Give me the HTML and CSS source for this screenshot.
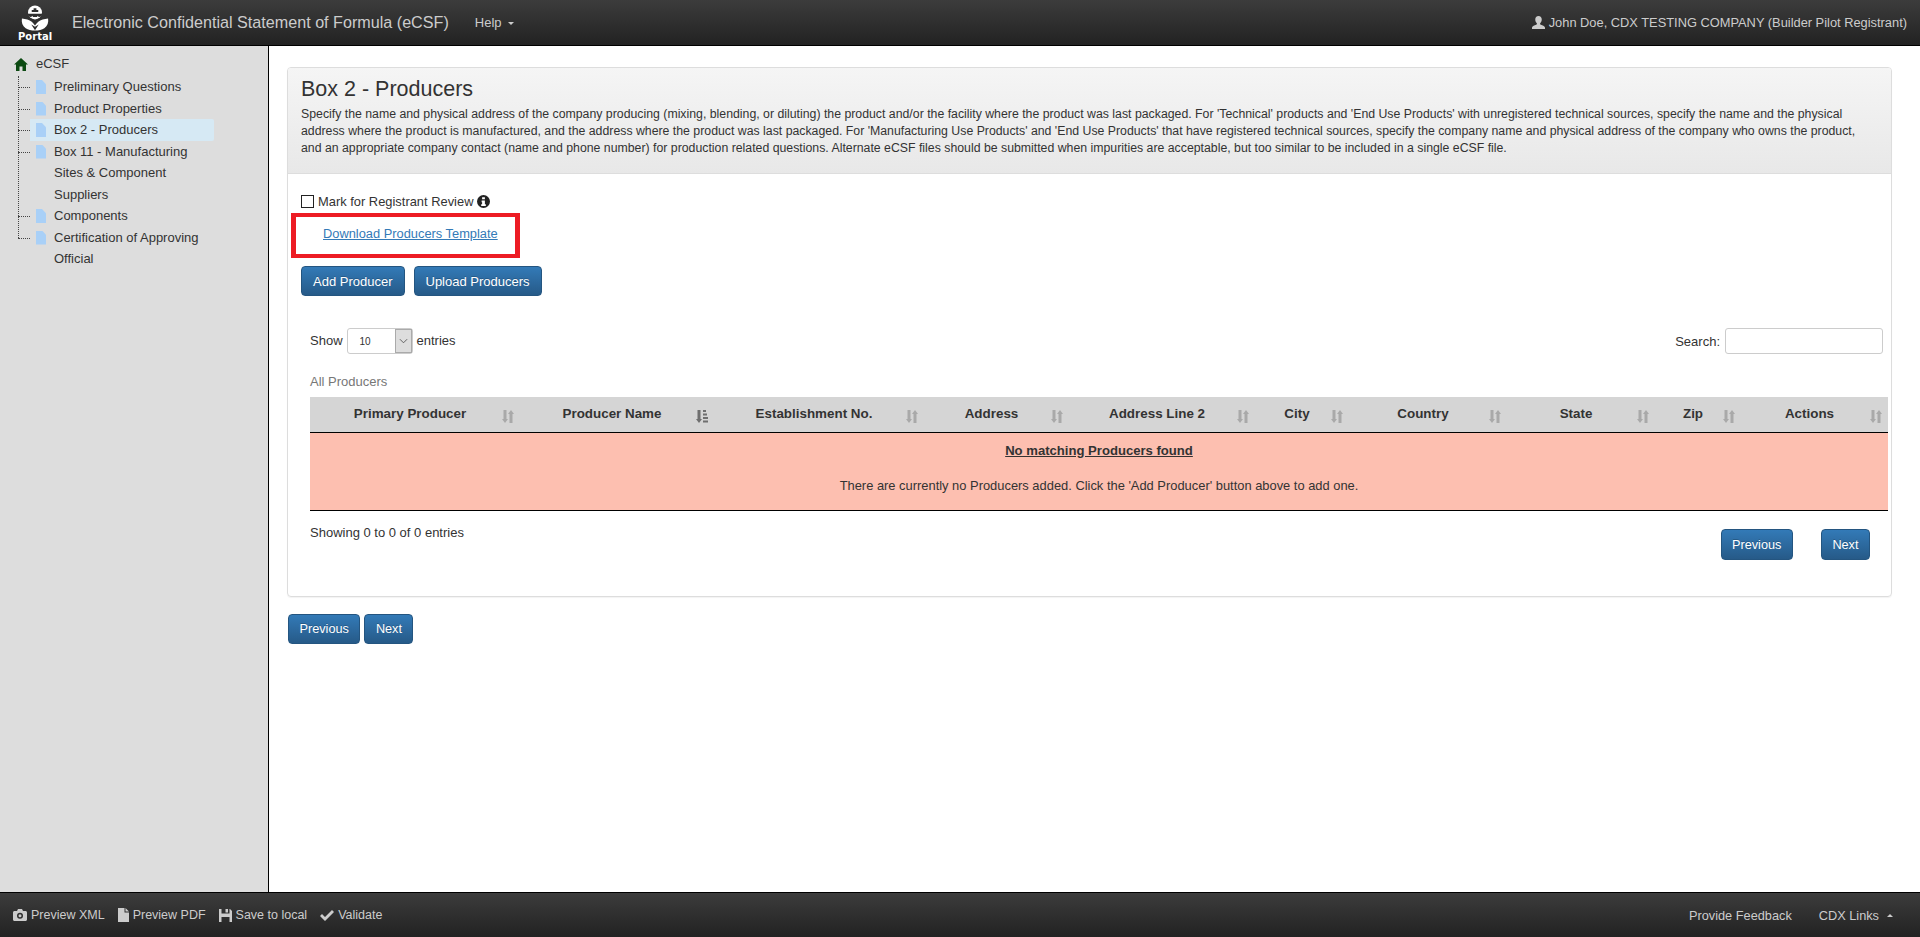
FILE: index.html
```html
<!DOCTYPE html>
<html lang="en">
<head>
<meta charset="utf-8">
<title>eCSF - Box 2 - Producers</title>
<link rel="stylesheet" href="styles.css">
</head>
<body>
<div class="app">
  <header class="topbar">
    <div class="logo">
      <svg class="logo-mark" viewBox="0 0 30 28" width="28" height="28">
        <circle cx="15" cy="8" r="7.500" fill="#fff"/>
        <path d="M7.500 9.500h15v1.500c-1.500 1.500-3 2-3.500 2l-1-1.500-1 1.500h-4l-1-1.500-1 1.500c-.5 0-2-.5-3.500-2z" fill="#2f2f2f"/>
        <path d="M13.500 3.500h3v2h2v2h-7v-2h2z" fill="#2f2f2f"/>
        <path d="M1 14.500c4 .5 8 1.500 10.500 3.500 1.500 1.200 2.800 3 3.500 4 .7-1 2-2.800 3.500-4 2.500-2 6.500-3 10.500-3.500.7 4-.5 8-4 10.500-2.500 1.800-6 2.500-10 2.500s-7.500-.7-10-2.500C1.500 22.500.3 18.500 1 14.500z" fill="#fff"/>
        <path d="M15 27l-4-6 4 2.500 4-2.500z" fill="#2f2f2f"/>
      </svg>
      <span class="logo-text">Portal</span>
    </div>
    <span class="brand">Electronic Confidential Statement of Formula (eCSF)</span>
    <span class="menu">Help <i class="caret"></i></span>
    <span class="user">
      <svg class="icon" viewBox="0 0 14 14" width="13" height="13"><path d="M7 0c2.200 0 3.500 1.500 3.500 3.800 0 1.700-.8 3.200-1.700 4-.3.800 0 1.300.8 1.700 1.700.7 3.900 1.300 4.400 3v1.500H0V12.500c.5-1.700 2.700-2.300 4.400-3 .8-.4 1.100-.9.800-1.700-.9-.8-1.700-2.300-1.700-4C3.500 1.500 4.800 0 7 0z" fill="#ccc"/></svg>
      John Doe, CDX TESTING COMPANY (Builder Pilot Registrant)
    </span>
  </header>

  <div class="middle">
    <nav class="sidebar">
      <div class="tree-root">
        <svg class="home" viewBox="0 0 14 13" width="14" height="13"><path d="M7 0l7 6.500h-2V13H8.500V8.500h-3V13H2V6.500H0z" fill="#0c4a12"/></svg>
        <span>eCSF</span>
      </div>
      <ul class="tree">
        <li class="node"><a>Preliminary Questions</a></li>
        <li class="node"><a>Product Properties</a></li>
        <li class="node node-selected"><a>Box 2 - Producers</a></li>
        <li class="node"><a>Box 11 - Manufacturing Sites &amp; Component Suppliers</a></li>
        <li class="node"><a>Components</a></li>
        <li class="node"><a>Certification of Approving Official</a></li>
      </ul>
    </nav>

    <main class="content">
      <section class="panel">
        <div class="panel-heading">
          <h1>Box 2 - Producers</h1>
          <p>Specify the name and physical address of the company producing (mixing, blending, or diluting) the product and/or the facility where the product was last packaged. For 'Technical' products and 'End Use Products' with unregistered technical sources, specify the name and the physical address where the product is manufactured, and the address where the product was last packaged. For 'Manufacturing Use Products' and 'End Use Products' that have registered technical sources, specify the company name and physical address of the company who owns the product, and an appropriate company contact (name and phone number) for production related questions. Alternate eCSF files should be submitted when impurities are acceptable, but too similar to be included in a single eCSF file.</p>
        </div>
        <div class="panel-body">
          <label class="review">
            <input type="checkbox" class="check">
            <span>Mark for Registrant Review</span>
            <svg class="info" viewBox="0 0 14 14" width="13" height="13"><circle cx="7" cy="7" r="7" fill="#222"/><path d="M5.500 2.500h3v2h-3zM5 6h3.500v4H9.500v1.800h-5V10h1V7.800H5z" fill="#fff"/></svg>
          </label>
          <div class="highlight"><a href="#">Download Producers Template</a></div>
          <div class="actions">
            <button class="btn btn-wide">Add Producer</button>
            <button class="btn btn-wide">Upload Producers</button>
          </div>
          <div class="datatable">
            <div class="dt-top">
              <div class="length">Show
                <div class="select"><span>10</span><span class="select-arrow"><svg viewBox="0 0 10 6" width="9" height="6"><path d="M1 1l4 4 4-4" fill="none" stroke="#555" stroke-width="1"/></svg></span></div>
                entries</div>
              <label class="search">Search: <input type="text"></label>
            </div>
            <div class="caption">All Producers</div>
            <table>
              <thead>
                <tr>
                  <th>Primary Producer<svg class="sort" viewBox="0 0 12 13"><use href="#both"/></svg></th>
                  <th>Producer Name<svg class="sort" viewBox="0 0 12 13"><use href="#asc"/></svg></th>
                  <th>Establishment No.<svg class="sort" viewBox="0 0 12 13"><use href="#both"/></svg></th>
                  <th>Address<svg class="sort" viewBox="0 0 12 13"><use href="#both"/></svg></th>
                  <th>Address Line 2<svg class="sort" viewBox="0 0 12 13"><use href="#both"/></svg></th>
                  <th>City<svg class="sort" viewBox="0 0 12 13"><use href="#both"/></svg></th>
                  <th>Country<svg class="sort" viewBox="0 0 12 13"><use href="#both"/></svg></th>
                  <th>State<svg class="sort" viewBox="0 0 12 13"><use href="#both"/></svg></th>
                  <th>Zip<svg class="sort" viewBox="0 0 12 13"><use href="#both"/></svg></th>
                  <th>Actions<svg class="sort" viewBox="0 0 12 13"><use href="#both"/></svg></th>
                </tr>
              </thead>
              <tbody>
                <tr>
                  <td colspan="10">
                    <p class="empty-title">No matching Producers found</p>
                    <p class="empty-text">There are currently no Producers added. Click the 'Add Producer' button above to add one.</p>
                  </td>
                </tr>
              </tbody>
            </table>
            <div class="dt-bottom">
              <div class="info-text">Showing 0 to 0 of 0 entries</div>
              <div class="paging">
                <button class="btn btn-page">Previous</button>
                <button class="btn btn-page">Next</button>
              </div>
            </div>
          </div>
        </div>
      </section>
      <div class="wizard">
        <button class="btn">Previous</button>
        <button class="btn">Next</button>
      </div>
    </main>
  </div>

  <footer class="bottombar">
    <span class="tool"><svg class="icon" viewBox="0 0 14 12" width="14" height="12"><path d="M1.500 2H4l1-2h4l1 2h2.500c.8 0 1.500.7 1.500 1.500v7c0 .8-.7 1.500-1.500 1.500h-11C.7 12 0 11.300 0 10.500v-7C0 2.700.7 2 1.500 2zM7 3.800a3 3 0 1 0 0 6 3 3 0 0 0 0-6zm0 1.500a1.500 1.500 0 1 1 0 3 1.500 1.500 0 0 1 0-3z" fill="#ccc" fill-rule="evenodd"/></svg>Preview XML</span>
    <span class="tool"><svg class="icon" viewBox="0 0 11 14" width="11" height="14"><path d="M0 0h6.500v4.500H11V14H0zM7.500 0L11 3.500H7.500z" fill="#ccc"/></svg>Preview PDF</span>
    <span class="tool"><svg class="icon" viewBox="0 0 13 13" width="13" height="13"><path d="M0 0h2.500v4.500h8V0H11l2 2v11h-2.500V8h-8v5H0zM6.500 0h2.500v3.500H6.500z" fill="#ccc"/></svg>Save to local</span>
    <span class="tool"><svg class="icon" viewBox="0 0 14 11" width="14" height="11"><path d="M0 6l2-2 3 3 7-7 2 2-9 9z" fill="#ccc"/></svg>Validate</span>
    <span class="spacer"></span>
    <span class="tool tool-feedback">Provide Feedback</span>
    <span class="tool tool-links">CDX Links <i class="caret caret-up"></i></span>
  </footer>
</div>
<svg class="defs" width="0" height="0">
  <defs>
    <g id="both" fill="#a9a9a9"><path d="M1.500 0h3v9H6L3 13 0 9h1.500z"/><path d="M9 0l3 4h-1.500v9h-3V4H6z"/></g>
    <g id="asc" fill="#6f6f6f"><path d="M1.500 0h3v9H6L3 13 0 9h1.500z"/><path d="M7 0h3v2H7zM7 3.500h4v2H7zM7 7h5v2H7zM7 10.500h5.500v2H7z"/></g>
  </defs>
</svg>
</body>
</html>
```
FILE: styles.css
```css
* { box-sizing: border-box; }
html, body { height: 100%; margin: 0; }
body {
  font-family: "Liberation Sans", Arial, sans-serif;
  font-size: 13px;
  line-height: 17px;
  color: #333;
  background: #fff;
  overflow: hidden;
}
.defs { display: block; height: 0; }
.app { display: flex; flex-direction: column; height: 937px; }

/* top bar */
.topbar {
  flex: 0 0 46px;
  display: flex;
  align-items: center;
  background: linear-gradient(#3c3c3c, #222);
  border-bottom: 1px solid #000;
  color: #ccc;
  padding-right: 13px;
}
.logo {
  flex: 0 0 72px;
  display: flex;
  flex-direction: column;
  align-items: flex-start;
  height: 45px;
  padding: 4px 0 0 18px;
}
.logo-mark { display: block; flex: none; margin-left: 3px; }
.logo-text {
  font-family: "DejaVu Sans", sans-serif;
  font-weight: 700;
  font-size: 10px;
  line-height: 10px;
  color: #fff;
}
.brand { font-size: 16.150px; color: #ccc; white-space: nowrap; }
.menu { margin-left: 26px; font-size: 13px; white-space: nowrap; }
.caret {
  display: inline-block;
  width: 0; height: 0;
  margin-left: 3px;
  vertical-align: middle;
  border-top: 3px solid #ccc;
  border-left: 3px solid transparent;
  border-right: 3px solid transparent;
}
.caret-up { border-top: 0; border-bottom: 3px solid #ccc; }
.user { margin-left: auto; font-size: 12.850px; white-space: nowrap; display: flex; align-items: center; gap: 4px; }

/* middle */
.middle { flex: 1; display: flex; min-height: 0; }
.sidebar {
  flex: 0 0 269px;
  background: #ddd;
  border-right: 1px solid #000;
  padding: 6px 0 0 14px;
  font-size: 13px;
  color: #333;
}
.tree-root { display: flex; align-items: center; height: 22px; gap: 8px; font-size: 13px; }
.home { margin-top: 3px; }
.tree {
  list-style: none;
  margin: 2px 0 0 4px;
  padding: 0;
  position: relative;
}
.tree::before {
  content: "";
  position: absolute;
  left: 0; top: 0;
  height: 162px;
  border-left: 1px dotted #444;
}
.node {
  position: relative;
  padding-left: 36px;
  line-height: 21.500px;
  width: 196px;
}
.node::before {
  content: "";
  position: absolute;
  left: 0; top: 11px;
  width: 12px;
  border-top: 1px dotted #444;
}
.node::after {
  content: "";
  position: absolute;
  left: 18px; top: 4px;
  width: 10px; height: 14px;
  background: #a9d0f7;
  clip-path: polygon(0 0, 60% 0, 100% 30%, 100% 100%, 0 100%);
}
.node-selected {
  background: linear-gradient(90deg, transparent 12px, #d6e9f4 12px);
  border-radius: 2px;
}

/* content */
.content { flex: 1; padding: 21px 28px 0 18px; min-width: 0; }
.panel {
  border: 1px solid #ddd;
  border-radius: 4px;
  height: 530px;
  box-shadow: 0 1px 1px rgba(0,0,0,.05);
}
.panel-heading {
  height: 106px;
  padding: 9px 13px 0;
  background: linear-gradient(#f5f5f5, #e8e8e8);
  border-bottom: 1px solid #ddd;
  border-radius: 3px 3px 0 0;
}
h1 { margin: 0; font-size: 21.500px; font-weight: 400; line-height: 24px; color: #333; }
.panel-heading p { margin: 5px 0 0; font-size: 12.300px; line-height: 17px; }
.panel-body { padding: 17px 0 0 13px; }
.review { display: flex; align-items: center; gap: 3px; height: 20px; font-size: 12.900px; }
.check {
  appearance: none;
  margin: 0 1px 0 0;
  width: 13px; height: 13px;
  border: 1px solid #222;
  background: #fff;
}
.info { margin-left: 1px; }
.highlight {
  width: 229px;
  height: 45px;
  margin: 2px 0 8px -10px;
  border: 5px solid #ed1c24;
  border-width: 4px 5px;
  padding: 8px 0 0 27px;
}
.highlight a { color: #337ab7; text-decoration: underline; font-size: 12.850px; }
.actions { display: flex; gap: 9px; }
.btn {
  font-family: inherit;
  font-size: 12.700px;
  height: 30px;
  padding: 0 10.500px;
  color: #fff;
  background: linear-gradient(#337ab7, #265a88);
  border: 1px solid #245580;
  border-radius: 4px;
  text-shadow: 0 -1px 0 rgba(0,0,0,.2);
}
.btn-wide { font-size: 13px; padding: 0 11px; }
.datatable { margin: 32px 3px 0 9px; }
.dt-top { display: flex; justify-content: space-between; padding-right: 5px; height: 26px; }
.length { display: flex; align-items: center; gap: 4px; margin-top: -2px; }
.select {
  width: 66px;
  height: 26px;
  display: flex;
  align-items: stretch;
  justify-content: space-between;
  border: 1px solid #ccc;
  border-radius: 3px;
  font-size: 10px;
  padding-left: 12px;
  line-height: 26px;
  margin-top: 2px;
}
.select-arrow {
  width: 17px;
  background: #ddd;
  border: 1px solid #aaa;
  display: flex;
  align-items: center;
  justify-content: center;
}
.search { display: flex; align-items: center; gap: 5px; }
.search input {
  width: 158px;
  height: 26px;
  border: 1px solid #ccc;
  border-radius: 3px;
}
.caption { margin-top: 19px; height: 24px; color: #777; font-size: 13px; }
table { width: 100%; border-collapse: separate; border-spacing: 0; table-layout: fixed; }
th {
  position: relative;
  height: 36px;
  background: #d5d5d5;
  border-bottom: 1px solid #000;
  padding: 0 20px 3px 10px;
  font-size: 13.400px;
  font-weight: 700;
  text-align: center;
  color: #333;
  white-space: nowrap;
}
th:nth-child(1) { width: 210px; }
th:nth-child(2) { width: 194px; }
th:nth-child(3) { width: 210px; }
th:nth-child(4) { width: 145px; }
th:nth-child(5) { width: 186px; }
th:nth-child(6) { width: 94px; }
th:nth-child(7) { width: 158px; }
th:nth-child(8) { width: 148px; }
th:nth-child(9) { width: 86px; }
th:nth-child(10) { width: 147px; }
.sort { position: absolute; right: 6px; top: 13px; width: 12px; height: 13px; }
td {
  height: 78px;
  background: #fdbfb0;
  border-bottom: 1px solid #000;
  text-align: center;
  padding: 0 0 8px;
  font-size: 12.900px;
}
.empty-title { margin: 0; font-weight: 700; text-decoration: underline; font-size: 13.100px; }
.empty-text { margin: 18px 0 0; }
.dt-bottom { display: flex; justify-content: space-between; padding-top: 13px; }
.paging { display: flex; gap: 28px; padding-right: 18px; margin-top: 5px; }
.btn-page { height: 31px; }
.wizard { display: flex; gap: 4px; margin: 17px 0 0 1px; }
.bottombar {
  flex: 0 0 45px;
  display: flex;
  align-items: center;
  background: linear-gradient(#3c3c3c, #222);
  border-top: 1px solid #000;
  color: #ccc;
  padding: 0 27px 0 13px;
  font-size: 12.500px;
}
.tool { display: flex; align-items: center; gap: 4px; margin-right: 13px; white-space: nowrap; }
.spacer { flex: 1; }
.tool-feedback { margin-right: 27px; font-size: 12.750px; }
.tool-links { margin-right: 0; gap: 5px; font-size: 12.750px; }
.icon { flex: none; }
```
